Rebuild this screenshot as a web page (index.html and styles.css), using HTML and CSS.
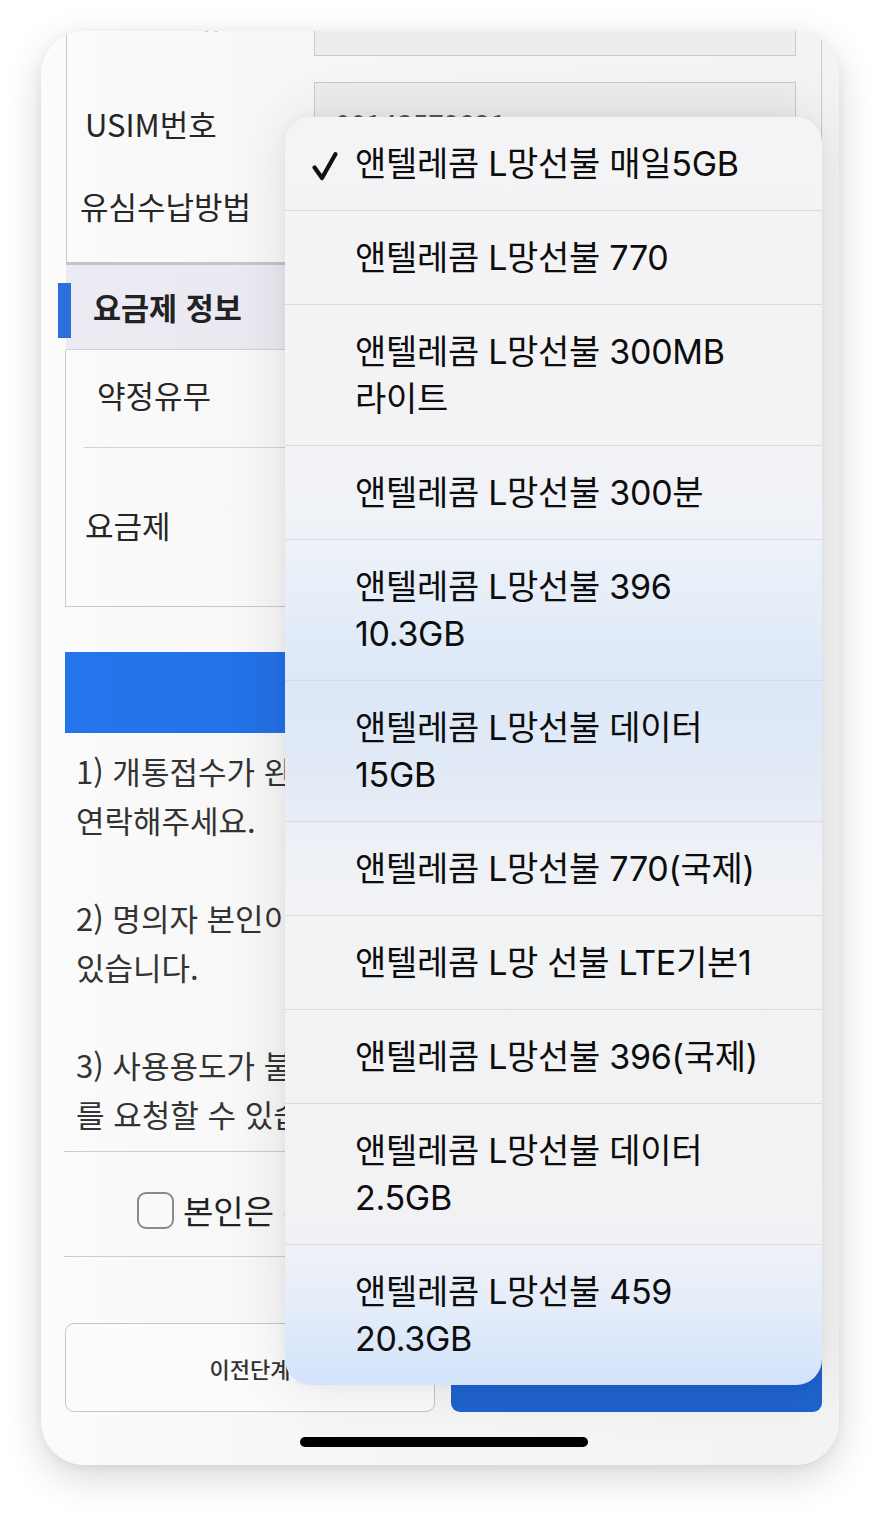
FILE: index.html
```html
<!DOCTYPE html>
<html lang="ko">
<head>
<meta charset="utf-8">
<title>요금제 선택</title>
<link rel="stylesheet" href="styles.css">
</head>
<body>
<div class="phone">
  <div class="screen">
    <div class="table table-top">
      <div class="row row-1">
        <div class="label lbl-1">USIM 종류</div>
        <div class="cell"><div class="input input-1"></div></div>
      </div>
      <div class="row row-2">
        <div class="label lbl-2">USIM번호</div>
        <div class="cell"><div class="input input-2">00143579821</div></div>
      </div>
      <div class="row row-3">
        <div class="label lbl-3">유심수납방법</div>
        <div class="cell"></div>
      </div>
    </div>

    <div class="section-head">요금제 정보</div>

    <div class="table table-plan">
      <div class="row row-contract"><div class="label lbl-contract">약정유무</div></div>
      <div class="row row-plan"><div class="label lbl-plan">요금제</div></div>
    </div>

    <button class="btn-wide" type="button"></button>

    <div class="notes">
      <p>1) 개통접수가 완료되면 담당자 확인 후 순차적으로 개통되며, 문의사항은 고객센터로<br>연락해주세요.</p>
      <p>2) 명의자 본인이 아닌 경우 개통이 제한되며 관련 법령에 따라 처벌받을 수<br>있습니다.</p>
      <p>3) 사용용도가 불분명하거나 부정사용이 의심되는 경우 추가 서류 제출<br>를 요청할 수 있습니다.</p>
    </div>

    <label class="agree"><span class="checkbox"></span><span class="agree-text">본인은 위 내용을 모두 확인하였습니다.</span></label>

    <div class="actions">
      <button class="btn-prev" type="button">이전단계</button>
      <button class="btn-next" type="button">다음단계</button>
    </div>
  </div>

  <div class="menu">
    <div class="opt selected">
      <svg class="check" viewBox="0 0 26 30" width="26" height="30"><path d="M2.6 16.5 L10 27 L23.4 3.2" fill="none" stroke="#111" stroke-width="4.2" stroke-linecap="round" stroke-linejoin="round"/></svg>
      앤텔레콤 L망선불 매일5GB
    </div>
    <div class="opt">앤텔레콤 L망선불 770</div>
    <div class="opt">앤텔레콤 L망선불 300MB<br>라이트</div>
    <div class="opt">앤텔레콤 L망선불 300분</div>
    <div class="opt">앤텔레콤 L망선불 396<br>10.3GB</div>
    <div class="opt">앤텔레콤 L망선불 데이터<br>15GB</div>
    <div class="opt">앤텔레콤 L망선불 770(국제)</div>
    <div class="opt">앤텔레콤 L망 선불 LTE기본1</div>
    <div class="opt">앤텔레콤 L망선불 396(국제)</div>
    <div class="opt">앤텔레콤 L망선불 데이터<br>2.5GB</div>
    <div class="opt">앤텔레콤 L망선불 459<br>20.3GB</div>
  </div>

  <div class="home-bar"></div>
</div>
</body>
</html>
```

FILE: styles.css
```css
* { box-sizing: border-box; }

html, body {
  margin: 0;
  padding: 0;
  background: #ffffff;
}

body {
  width: 880px;
  height: 1515px;
  overflow: hidden;
  font-family: "Noto Sans CJK KR", "Noto Sans", sans-serif;
  color: #2b2b2b;
}

.phone {
  position: relative;
  margin: 31px 0 0 41px;
  width: 798px;
  height: 1434px;
  border-radius: 44px;
  overflow: hidden;
  background: linear-gradient(90deg, #fbfbfb 0%, #f6f6f6 40%, #f3f3f3 100%);
  box-shadow: 0 12px 38px rgba(0, 0, 0, 0.16), 0 2px 10px rgba(0, 0, 0, 0.06);
}

.screen {
  padding: 0 17px 0 24px;
}

/* ---------- tables ---------- */
.table-top {
  margin-top: -50px;
  margin-left: 1px;
  border-left: 1px solid #c9c9c9;
  border-right: 1px solid #c9c9c9;
}

.row {
  display: flex;
  align-items: flex-start;
}

.label {
  flex: none;
  width: 247px;
  font-size: 31px;
  line-height: 37px;
  color: #262626;
  white-space: nowrap;
}

.cell {
  flex: 1;
  padding-right: 25px;
}

.input {
  border: 1px solid #c9c9c9;
  background: #ededed;
  font-size: 28px;
  line-height: 34px;
  color: #555;
  padding-left: 20px;
  overflow: hidden;
}

.row-1 { height: 88px; }
.lbl-1 { padding: 15px 0 0 18px; }
.input-1 { margin-top: 10px; height: 65px; }

.row-2 { height: 110px; }
.lbl-2 { padding: 36px 0 0 18px; }
.input-2 { margin-top: 13px; height: 66px; padding-top: 24px; }

.row-3 { height: 83px; }
.lbl-3 { padding: 8px 0 0 13px; }

.section-head {
  position: relative;
  display: flex;
  align-items: center;
  height: 88px;
  margin-left: 1px;
  padding-left: 27px;
  border-top: 3px solid #c4c4c4;
  border-bottom: 1px solid #d0d0d0;
  background: linear-gradient(90deg, #eceaf2 0%, #e7e5ef 100%);
  font-size: 30.5px;
  font-weight: 700;
  color: #222;
}

.section-head::before {
  content: "";
  position: absolute;
  left: -8px;
  top: 18px;
  width: 13px;
  height: 55px;
  background: #2a6fdc;
}

.table-plan {
  border-left: 1px solid #c9c9c9;
  border-right: 1px solid #c9c9c9;
  border-bottom: 1px solid #c9c9c9;
}

.row-contract {
  height: 98px;
  margin-left: 18px;
  border-bottom: 1px solid #d3d3d3;
}
.lbl-contract { padding: 26px 0 0 13px; }

.row-plan { height: 158px; }
.lbl-plan { padding: 58px 0 0 19px; }

/* ---------- wide button ---------- */
.btn-wide {
  display: block;
  width: 100%;
  height: 81px;
  margin-top: 45px;
  border: 0;
  padding: 0;
  background: linear-gradient(90deg, #2475ec 0%, #1f66d6 100%);
}

/* ---------- notes ---------- */
.notes {
  margin-top: 13px;
  padding-left: 11px;
  font-size: 31px;
  line-height: 49px;
  color: #333;
  white-space: nowrap;
  overflow: hidden;
}

.notes p {
  margin: 0 0 49px;
}

.notes p:last-child {
  margin-bottom: 0;
}

/* ---------- agree ---------- */
.agree {
  display: flex;
  align-items: center;
  margin: 13px 0 0 -1px;
  padding: 40px 0 27px 73px;
  border-top: 1px solid #cbcbcb;
  border-bottom: 1px solid #cbcbcb;
  height: 106px;
}

.checkbox {
  flex: none;
  width: 37px;
  height: 37px;
  border: 2.5px solid #8b8b8b;
  border-radius: 9px;
  background: #fafafa;
}

.agree-text {
  margin-left: 9px;
  font-size: 33px;
  line-height: 37px;
  color: #222;
  white-space: nowrap;
}

/* ---------- actions ---------- */
.actions {
  display: flex;
  gap: 16px;
  margin-top: 66px;
  height: 89px;
}

.btn-prev,
.btn-next {
  border-radius: 9px;
  font-family: "Noto Sans CJK KR", sans-serif;
  font-size: 22px;
  font-weight: 500;
  padding: 0;
}

.btn-prev {
  flex: none;
  width: 370px;
  border: 1.5px solid #c6c6c6;
  background: #fbfbfb;
  color: #333;
}

.btn-next {
  flex: 1;
  border: 0;
  background: #1f63cd;
  color: #fff;
}

/* ---------- home indicator ---------- */
.home-bar {
  position: absolute;
  left: 259px;
  top: 1406px;
  width: 288px;
  height: 10px;
  border-radius: 5px;
  background: #000;
}

/* ---------- select menu (overlay) ---------- */
.menu {
  position: absolute;
  left: 244px;
  top: 86px;
  width: 537px;
  border-radius: 26px;
  overflow: hidden;
  background: linear-gradient(180deg,
    #f4f4f6 0%,
    #f3f3f5 25%,
    #eef2f8 33%,
    #e3ecf8 40%,
    #dce8f8 45%,
    #e2eaf6 52%,
    #eef1f6 58%,
    #f2f3f5 63%,
    #f2f2f4 87%,
    #e9eff8 92%,
    #dbe8fa 97%,
    #d2e3fb 100%);
  box-shadow: 0 0 60px rgba(0, 0, 0, 0.10), 0 0 12px rgba(0, 0, 0, 0.04);
}

.opt {
  position: relative;
  padding: 23px 16px 23px 70px;
  border-bottom: 1px solid #d9d9de;
  font-family: "Inter", "Noto Sans CJK KR", sans-serif;
  font-size: 34px;
  line-height: 47px;
  letter-spacing: -0.3px;
  color: #0d0d0d;
  white-space: nowrap;
}

.opt:last-child {
  border-bottom: 0;
}

.check {
  position: absolute;
  left: 27px;
  top: 34px;
}
```
